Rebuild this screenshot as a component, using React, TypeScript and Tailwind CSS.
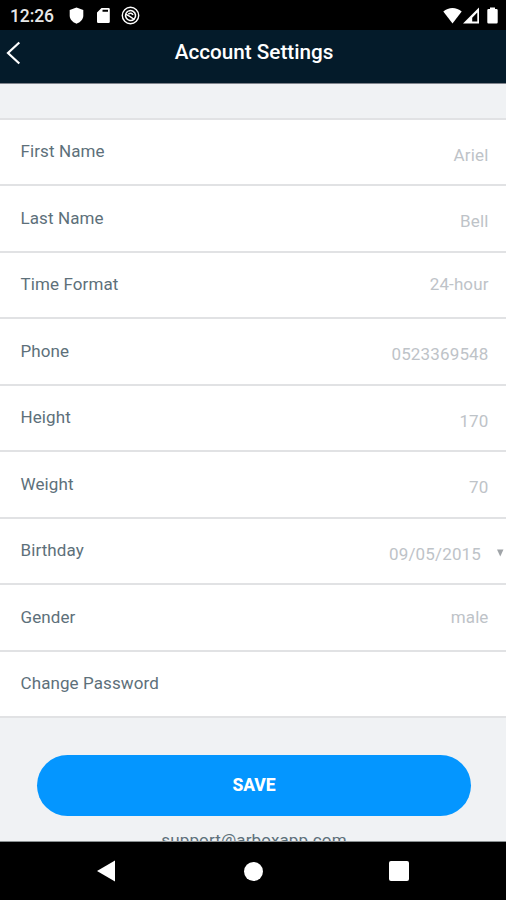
import React from 'react';
import clsx from 'clsx';

interface Field {
  label: string;
  value?: string;
  input?: boolean;
  dropdown?: boolean;
}

const fields: Field[] = [
  { label: 'First Name', value: 'Ariel', input: true },
  { label: 'Last Name', value: 'Bell', input: true },
  { label: 'Time Format', value: '24-hour' },
  { label: 'Phone', value: '0523369548', input: true },
  { label: 'Height', value: '170', input: true },
  { label: 'Weight', value: '70', input: true },
  { label: 'Birthday', value: '09/05/2015', input: true, dropdown: true },
  { label: 'Gender', value: 'male' },
  { label: 'Change Password' },
];

const StatusBar: React.FC = () => (
  <div className="flex h-[30px] shrink-0 items-center justify-between bg-black pl-[10px] pr-[8px] pt-[1px] text-white">
    <div className="flex items-center">
      <span className="w-[59px] pt-[2px] text-[17.5px] leading-none font-medium tracking-[-0.1px] text-[#e8e8e8]">12:26</span>
      <svg width="15" height="17" viewBox="0 0 15 17" fill="currentColor">
        <path d="M7.500 0.500 14.300 3v5.800c0 3.600-3 6.700-6.800 7.900C3.700 15.500.7 12.400.7 8.800V3z" />
      </svg>
      <svg className="ml-[12px]" width="15" height="17" viewBox="0 0 15 17" fill="currentColor">
        <path fillRule="evenodd" d="M5.500 1H12.500a1.300 1.300 0 0 1 1.300 1.300V14.700A1.300 1.300 0 0 1 12.500 16H2.300A1.300 1.300 0 0 1 1 14.700V5.500zM6.500 2.800v1.900h5.500V2.800z" />
      </svg>
      <svg className="ml-[10px]" width="19" height="19" viewBox="0 0 19 19" fill="none" stroke="currentColor">
        <circle cx="9.500" cy="9.500" r="8.200" strokeWidth="1.400" />
        <path d="M5 7.500A5 5 0 1 0 7.500 5" strokeWidth="1.600" />
        <path d="M4.200 7.800Q8 10 9.500 10.800L13.300 13.500M7.300 8Q10.500 6 12 9" strokeWidth="1.500" />
        <path d="M7.500 5A5 5 0 0 0 5 7.500" strokeWidth="1.600" />
      </svg>
    </div>
    <div className="flex items-center">
      <svg width="19" height="17" viewBox="0 0 19 17" fill="currentColor">
        <path d="M9.500 16.500 0.300 4.500C5.500-.3 13.500-.3 18.700 4.500z" />
      </svg>
      <svg className="ml-[1px]" width="16" height="17" viewBox="0 0 16 17" fill="currentColor">
        <path fillRule="evenodd" d="M16 0.500v16H0zM14.300 5.500 9.200 10.800v3.700h5.100z" />
      </svg>
      <svg className="ml-[8px]" width="11" height="17" viewBox="0 0 11 17" fill="currentColor">
        <path d="M3 0.500h5v1.500h1.500a1.200 1.200 0 0 1 1.200 1.200v12a1.200 1.200 0 0 1-1.200 1.200h-8a1.200 1.200 0 0 1-1.200-1.200v-12A1.200 1.200 0 0 1 1.500 2H3z" />
      </svg>
    </div>
  </div>
);

const Header: React.FC = () => (
  <header className="flex h-[54px] shrink-0 items-center border-b border-[#80848c] bg-[#041b2a] pb-[8px] text-white">
    <button className="w-[30px] pl-[6px]">
      <svg width="16" height="24" viewBox="0 0 16 24" fill="none" stroke="currentColor" strokeWidth="2.200">
        <path d="M13.300 1.500 2 12l11.300 10.500" />
      </svg>
    </button>
    <h1 className="flex-1 pr-[28px] text-center text-[20.7px] leading-none font-medium">Account Settings</h1>
  </header>
);

const FieldRow: React.FC<{ field: Field }> = ({ field }) => (
  <div className="flex h-[66.450px] items-center border-b-2 border-[#e1e2e4] pb-[1.500px] pl-[20.500px] text-[17px] leading-5 tracking-[0.100px]">
    <span className="flex-1 text-[#5d707a]">{field.label}</span>
    <span
      className={clsx(
        'text-[#bec3c8]',
        field.input && 'pt-[7px] tracking-[0.150px]',
        field.dropdown ? 'pr-[15px]' : 'pr-[17.500px]'
      )}
    >
      {field.value}
    </span>
    {field.dropdown && (
      <svg className="mt-[5px] mr-[2px]" width="8" height="8" viewBox="0 0 8 8" fill="#a0a4a8">
        <path d="M1 0.500h6.500L4.250 7.500z" />
      </svg>
    )}
  </div>
);

const NavBar: React.FC = () => (
  <nav className="flex h-[58px] shrink-0 items-center bg-black pl-[96px] text-white">
    <svg width="20" height="22" viewBox="0 0 20 22" fill="currentColor">
      <path d="M19 0.500v21L1 11z" />
    </svg>
    <div className="ml-[128px] size-[19px] rounded-full bg-white"></div>
    <div className="ml-[126px] size-[20px] rounded-[2px] bg-white"></div>
  </nav>
);

const App: React.FC = () => {
  return (
    <div className="flex h-[900px] w-[506px] flex-col overflow-hidden bg-[#f0f2f4] font-[Roboto,sans-serif]">
      <StatusBar />
      <Header />
      <main className="flex min-h-0 flex-1 flex-col overflow-hidden border-b border-[#8a9092] pt-[34px]">
        <div className="shrink-0 border-t-2 border-[#e1e2e4] bg-white">
          {fields.map((field) => (
            <FieldRow key={field.label} field={field} />
          ))}
        </div>
        <button className="mr-[35px] ml-[37px] mt-[37px] h-[61px] shrink-0 rounded-full bg-[#0496ff] text-[17.5px] font-extrabold tracking-[-0.100px] text-white">
          SAVE
        </button>
        <p className="mt-[14px] shrink-0 pl-[2px] text-center text-[17px] leading-5 tracking-[0.130px] text-[#5d707a]">
          support@arboxapp.com
        </p>
      </main>
      <NavBar />
    </div>
  );
};

export default App;
